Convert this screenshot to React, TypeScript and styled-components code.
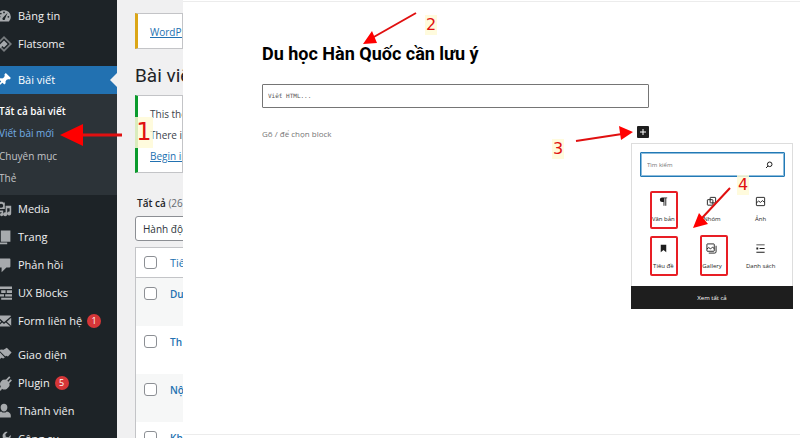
import React from "react";
import styled, { createGlobalStyle, css } from "styled-components";

const GlobalStyle = createGlobalStyle`
  * { box-sizing: border-box; }
  body { margin: 0; background: #fff; }
  body, button, input, select, table {
    font-family: "Open Sans", "Noto Sans", sans-serif;
  }
  h1, p, ul { margin: 0; padding: 0; }
  h1 { font-family: Roboto, "Open Sans", sans-serif; }
`;

/* ---------- page ---------- */

const Page = styled.div`
  position: relative;
  display: flex;
  height: 100vh;
  overflow: hidden;
`;

/* ---------- admin menu ---------- */

const Sidebar = styled.nav`
  flex: 0 0 117px;
  padding-top: 2px;
  background: #1d2327;
  overflow: hidden;
`;

const MenuGroup = styled.ul<{ $rows: number }>`
  display: grid;
  grid-auto-rows: 1fr;
  height: ${(p) => Math.floor((p.$rows * 55) / 2)}px;
  margin-bottom: 9px;
  list-style: none;
`;

const MenuLink = styled.a<{ $active?: boolean }>`
  position: relative;
  display: flex;
  align-items: center;
  gap: 6px;
  height: 28px;
  margin-left: -4px;
  color: #f0f0f1;
  font-size: 11px;
  font-weight: 500;
  line-height: 16px;
  white-space: nowrap;
  text-decoration: none;
  svg {
    flex: none;
    width: 16px;
    height: 16px;
    color: ${(p) => (p.$active ? "#fff" : "#a7aaad")};
  }
  ${(p) =>
    p.$active &&
    css`
      background: #2271b1;
      color: #fff;
      &::after {
        content: "";
        position: absolute;
        right: 0;
        top: 7px;
        border: 7px solid transparent;
        border-left-width: 0;
        border-right-color: #f0f0f1;
      }
    `}
`;

const Submenu = styled.ul`
  display: grid;
  grid-auto-rows: 1fr;
  align-items: center;
  height: 101px;
  padding: 6px 0;
  background: #2c3338;
  list-style: none;
`;

const SubmenuLink = styled.a<{ $tone?: "current" | "hover" }>`
  display: block;
  margin-left: -1px;
  color: ${(p) =>
    p.$tone === "current" ? "#fff" : p.$tone === "hover" ? "#72aee6" : "#c3c4c7"};
  font-size: 10px;
  font-weight: ${(p) => (p.$tone === "current" ? 600 : 400)};
  line-height: 16px;
  white-space: nowrap;
  text-decoration: none;
`;

const Count = styled.span`
  width: 14px;
  height: 14px;
  margin-left: -1px;
  border-radius: 50%;
  background: #d63638;
  color: #fff;
  font-size: 9px;
  line-height: 14px;
  text-align: center;
`;

/* ---------- post list ---------- */

const ListPane = styled.section`
  flex: 0 0 66px;
  padding: 13px 0 0 18px;
  background: #f0f0f1;
  color: #3c434a;
  font-size: 10px;
  white-space: nowrap;
  overflow: hidden;
`;

const Notice = styled.div<{ $color: string }>`
  display: flex;
  flex-direction: column;
  gap: 5px;
  padding: 10px 0 8px 12px;
  border: 1px solid #c3c4c7;
  border-left: 3px solid ${(p) => p.$color};
  background: #fff;
  line-height: 16px;
  overflow: hidden;
`;

const TextLink = styled.a`
  color: #2271b1;
`;

const ListTitle = styled.h1`
  padding: 15px 0 7px;
  color: #1d2327;
  font-size: 19px;
  font-weight: 400;
  line-height: 24px;
`;

const Filter = styled.p`
  padding: 22px 0 5px 2px;
  line-height: 16px;
  color: #646970;
  b { color: #1d2327; font-weight: 600; }
`;

const BulkSelect = styled.select`
  display: block;
  appearance: none;
  width: 120px;
  height: 25px;
  padding: 0 7px;
  border: 1px solid #8c8f94;
  border-radius: 3px;
  background: #fff;
  color: #2c3338;
  font-size: 10px;
`;

const PostTable = styled.table`
  width: 120px;
  margin-top: 6px;
  border: 1px solid #c3c4c7;
  border-collapse: separate;
  border-spacing: 0;
  background: #fff;
  font-size: 11px;
  th, td { padding: 8px 0 0; text-align: left; vertical-align: top; }
  th:first-child, td:first-child { width: 34px; padding-left: 8px; }
  thead th { height: 30px; border-bottom: 1px solid #c3c4c7; font-weight: 400; color: #2271b1; line-height: 14px; }
  tbody td { height: 48px; padding-top: 9px; line-height: 14px; }
  tbody tr:nth-child(odd) { background: #f6f7f7; }
`;

const Check = styled.input`
  display: block;
  appearance: none;
  width: 13px;
  height: 13px;
  margin: 0;
  border: 1px solid #8c8f94;
  border-radius: 3px;
  background: #fff;
`;

const RowLink = styled.a`
  color: #2271b1;
  font-size: 10px;
  font-weight: 600;
  text-decoration: none;
`;

/* ---------- block editor ---------- */

const Editor = styled.main`
  flex: 1;
  min-width: 0;
  display: flex;
  flex-direction: column;
  border-top: 1px solid #fff;
  background: #fff;
`;

const Canvas = styled.div`
  flex: 1;
  padding: 40px 79px 0;
  border-top: 1px solid #ececec;
  border-bottom: 1px solid #ececec;
`;

const StatusBar = styled.div`
  height: 3px;
`;

const Blocks = styled.div`
  display: flex;
  flex-direction: column;
  max-width: 387px;
`;

const PostTitle = styled.h1`
  margin-bottom: 18px;
  color: #000;
  font-size: 18px;
  font-weight: 700;
  line-height: 24px;
  white-space: nowrap;
`;

const HtmlInput = styled.input`
  height: 24px;
  margin-bottom: 18px;
  padding: 0 5px 1px;
  border: 1px solid #757575;
  border-radius: 1px;
  font-family: "DejaVu Sans Mono", monospace;
  font-size: 6px;
  &::placeholder { color: #555; opacity: 1; }
`;

const AppenderRow = styled.div`
  display: flex;
  align-items: flex-start;
  justify-content: space-between;
  color: #757575;
  font-size: 8px;
  line-height: 16px;
`;

const Inserter = styled.div`
  position: relative;
`;

const AddButton = styled.button`
  display: grid;
  place-items: center;
  width: 12px;
  height: 12px;
  padding: 0;
  border: 0;
  border-radius: 1px;
  background: #1e1e1e;
  color: #fff;
`;

const Popover = styled.div`
  position: absolute;
  top: 17px;
  left: -6px;
  width: 162px;
  border: 1px solid #ddd;
  background: #fff;
  color: #1e1e1e;
`;

const SearchBox = styled.label`
  display: flex;
  align-items: center;
  height: 25px;
  margin: 8px 7px 12px 8px;
  padding: 0 11px 0 6px;
  border: 1px solid #2279b5;
  border-radius: 1px;
  box-shadow: inset 0 0 0 1px #8cbcdc;
  input {
    flex: 1;
    min-width: 0;
    padding: 0;
    border: 0;
    outline: 0;
    background: none;
    font-size: 6px;
  }
  input::placeholder { color: #757575; opacity: 1; }
`;

const BlockGrid = styled.div`
  display: grid;
  grid-template-columns: repeat(3, 1fr);
  margin: 0 7px 3px;
`;

const BlockButton = styled.button`
  display: flex;
  flex-direction: column;
  align-items: center;
  gap: 7px;
  height: 47px;
  padding: 7px 0 0;
  border: 0;
  background: none;
  color: #1e1e1e;
  font-size: 6px;
  line-height: 10px;
`;

const BrowseAll = styled.button`
  display: block;
  width: calc(100% + 2px);
  height: 23px;
  margin: 0 -1px -1px;
  border: 0;
  background: #1e1e1e;
  color: #fff;
  font-size: 6px;
  font-weight: 500;
`;

/* ---------- tutorial marks over the page ---------- */

const Marks = styled.div`
  position: absolute;
  inset: 0;
  pointer-events: none;
  overflow: hidden;
`;

const Arrows = styled.svg`
  position: absolute;
  left: 0;
  top: 0;
`;

const Step = styled.span<{ $x: number; $y: number; $large?: boolean }>`
  position: absolute;
  left: ${(p) => p.$x}px;
  top: ${(p) => p.$y}px;
  width: ${(p) => (p.$large ? 18 : 12)}px;
  background: rgba(255, 250, 215, 0.85);
  color: #e01010;
  font-family: "DejaVu Sans", sans-serif;
  font-size: ${(p) => (p.$large ? 24 : 16)}px;
  line-height: ${(p) => (p.$large ? 31 : 20)}px;
  display: flex;
  justify-content: center;
`;

const Frame = styled.div<{ $x: number; $y: number; $h: number }>`
  position: absolute;
  left: ${(p) => p.$x}px;
  top: ${(p) => p.$y}px;
  width: 28px;
  height: ${(p) => p.$h}px;
  border: 2px solid #e81e25;
  border-radius: 2px;
`;

/* ---------- icons ---------- */

const solid: Record<string, React.ReactNode> = {
  dashboard: (
    <>
      <path d="M3.800 17a8.500 8.500 0 1 1 12.400 0z" />
      <g fill="#1d2327">
        <circle cx="10" cy="5.500" r="1.100" /><circle cx="6" cy="7" r="1.100" />
        <circle cx="4.500" cy="11" r="1.100" /><circle cx="15.500" cy="11" r="1.100" />
        <path d="M14.500 6 11.400 13a1.700 1.700 0 1 1-2.500-1.200z" />
      </g>
    </>
  ),
  flatsome: (
    <>
      <path d="M10 0 20 10 10 20 0 10zm0 3L3 10l7 7 7-7z" fillRule="evenodd" opacity=".65" />
      <path d="M10 5.500 14.500 10 10 14.500 8 12.500 5.500 15 3 12.500z" />
    </>
  ),
  pin: <path d="M10.440 3.020l1.820-1.820 6.360 6.350-1.830 1.820c-1.050-.68-2.480-.57-3.410.36l-.75.75c-.92.93-1.040 2.350-.35 3.410l-1.830 1.820-2.410-2.410-2.800 2.790c-.42.42-3.380 2.710-3.800 2.290s1.860-3.390 2.280-3.810l2.790-2.790L4.100 9.360l1.830-1.820c1.050.69 2.480.57 3.400-.36l.75-.75c.93-.92 1.050-2.350.36-3.410z" />,
  media: (
    <>
      <path fillRule="evenodd" d="M2 2h2l1-1h3l1 1h2v8H2zm4.500 1.500a2.500 2.500 0 1 0 0 5 2.500 2.500 0 0 0 0-5z" />
      <path d="M12 6h7v9.500a2.500 2.500 0 1 1-2-2.400V9h-3v7.500a2.500 2.500 0 1 1-2-2.400zM4 12h5v5a2 2 0 1 1-2-2v-1H4z" />
    </>
  ),
  pages: <path d="M6 2h12v14H6zM2 5h3v12h9v2H2z" />,
  comment: <path d="M3 2h14a1 1 0 0 1 1 1v9a1 1 0 0 1-1 1h-4l-6 6v-6H3a1 1 0 0 1-1-1V3a1 1 0 0 1 1-1z" />,
  blocks: (
    <path d="M0 2h20v3H0zM0 6.500h5V10H0zm6.500 0H12V10H6.500zm7 0H20V10h-6.500zM0 11.500h10v3H0zm11.500 0H20v3h-8.500zM0 16h5v2.500H0zm6.500 0H20v2.500H6.500z" />
  ),
  mail: <path d="M2 3h16l.8 1L10 11.500 1.200 4zM1 6l5.500 4.800L1 16zM19 6v10l-5.500-5.200zM7.700 11.900 10 13.800l2.300-1.900L18 17H2z" />,
  brush: <path d="m9.500 3.500 4-2.500 6 6-4.500 5-2.500-1-.8.8L4.200 4.500l2-1.500zM3.500 5.500l7.500 7.500-2 1.500-2.500-1-4.500 5c-1 .8-2.700-.8-1.900-1.900L5 12 2 7.500z" />,
  plug: <path d="m12.500 5.500 4-4 1.600 1.600-4 4 1.300 1.300 3-3 1.500 1.600-3.300 3.400c1 2.400 0 4.400-2 6l-1.200 1.100c-2.300 1.200-4.600.9-6-.3L6.500 19c-1.500 1-6 1-6 1v-2c2 0 3.300-.1 4.200-.8L6 14c-1.800-2-1-4.700.8-6.500L8.500 6z" />,
  user: <path d="M10 1a4.200 4.200 0 0 1 4.200 4.500c0 2.800-1.700 5-4.200 5s-4.200-2.200-4.200-5A4.200 4.200 0 0 1 10 1zM6.500 10.500c2 2 5 2 7 0 3 .5 5 2.500 5 5V18h-17v-2.500c0-2.500 2-4.500 5-5z" />,
  wrench: <path d="M17 9.500c-1.600 1.700-3.800 2-5.600 1.200L5 17.600a2 2 0 0 1-3-3l6.700-6.500c-.9-1.800-.4-4 1.200-5.500C11.300 1 13 .8 14.500 1.200L11.700 4l.5 3.300 3.400.5 2.700-2.800c.5 1.500.1 3.300-1.300 4.500z" />,
};

const MenuIcon = ({ name }: { name: string }) => (
  <svg viewBox="0 0 20 20" fill="currentColor" aria-hidden="true">{solid[name]}</svg>
);

const blockIcons: Record<string, React.ReactNode> = {
  paragraph: <path d="M9 3h11v2h-2v16h-2V5h-2v16h-2v-8H9A5 5 0 0 1 9 3z" fill="currentColor" />,
  group: (
    <g fill="none" stroke="currentColor" strokeWidth="2">
      <rect x="3" y="8" width="12" height="12" rx="1" /><rect x="9" y="3" width="12" height="12" rx="1" />
    </g>
  ),
  image: (
    <g fill="none" stroke="currentColor" strokeWidth="2">
      <rect x="3" y="3" width="18" height="18" rx="1" /><path d="m3 15 5-4 4 3 4-4 5 4" />
    </g>
  ),
  heading: <path d="M6 4h12v16l-6-5-6 5z" fill="currentColor" />,
  gallery: (
    <g fill="none" stroke="currentColor" strokeWidth="2">
      <rect x="2" y="2" width="16" height="16" rx="1" /><path d="m2 13 4-3 4 3 4-4 4 3M22 6v13a3 3 0 0 1-3 3H6" />
    </g>
  ),
  list: <path d="M3 3h18v2H3zM10 11h11v2H10zM3 19h18v2H3zM3 10h4v4H3z" fill="currentColor" />,
};

const BlockIcon = ({ name }: { name: string }) => (
  <svg width="11" height="11" viewBox="0 0 24 24" aria-hidden="true">{blockIcons[name]}</svg>
);

/* ---------- data ---------- */

type Item = { icon: string; label: string; count?: number };

const topItems: Item[] = [
  { icon: "dashboard", label: "Bảng tin" },
  { icon: "flatsome", label: "Flatsome" },
];
const contentItems: Item[] = [
  { icon: "media", label: "Media" },
  { icon: "pages", label: "Trang" },
  { icon: "comment", label: "Phản hồi" },
  { icon: "blocks", label: "UX Blocks" },
  { icon: "mail", label: "Form liên hệ", count: 1 },
];
const adminItems: Item[] = [
  { icon: "brush", label: "Giao diện" },
  { icon: "plug", label: "Plugin", count: 5 },
  { icon: "user", label: "Thành viên" },
  { icon: "wrench", label: "Công cụ" },
];
const blocks = [
  ["paragraph", "Văn bản"],
  ["group", "Nhóm"],
  ["image", "Ảnh"],
  ["heading", "Tiêu đề"],
  ["gallery", "Gallery"],
  ["list", "Danh sách"],
];

const Menu = ({ items }: { items: Item[] }) => (
  <MenuGroup $rows={items.length}>
    {items.map((item) => (
      <li key={item.label}>
        <MenuLink href="#">
          <MenuIcon name={item.icon} />
          {item.label}
          {item.count && <Count>{item.count}</Count>}
        </MenuLink>
      </li>
    ))}
  </MenuGroup>
);

export default function App() {
  return (
    <Page>
      <GlobalStyle />
      <Sidebar>
        <Menu items={topItems} />
        <MenuLink href="#" $active>
          <MenuIcon name="pin" />
          Bài viết
        </MenuLink>
        <Submenu>
          <li><SubmenuLink href="#" $tone="current">Tất cả bài viết</SubmenuLink></li>
          <li><SubmenuLink href="#" $tone="hover">Viết bài mới</SubmenuLink></li>
          <li><SubmenuLink href="#">Chuyên mục</SubmenuLink></li>
          <li><SubmenuLink href="#">Thẻ</SubmenuLink></li>
        </Submenu>
        <Menu items={contentItems} />
        <Menu items={adminItems} />
      </Sidebar>

      <ListPane>
        <Notice $color="#dba617"><TextLink href="#">WordPress</TextLink></Notice>
        <ListTitle>Bài viết</ListTitle>
        <Notice $color="#0a9b2c">
          <p>This theme</p>
          <p>There is</p>
          <TextLink href="#">Begin installing</TextLink>
        </Notice>
        <Filter><b>Tất cả</b> (26)</Filter>
        <BulkSelect aria-label="Hành động"><option>Hành động</option></BulkSelect>
        <PostTable>
          <thead>
            <tr><th><Check type="checkbox" aria-label="Chọn tất cả" /></th><th>Tiêu đề</th></tr>
          </thead>
          <tbody>
            {["Du", "Th", "Nộ", "Kh"].map((title) => (
              <tr key={title}>
                <td><Check type="checkbox" aria-label={title} /></td>
                <td><RowLink href="#">{title}</RowLink></td>
              </tr>
            ))}
          </tbody>
        </PostTable>
      </ListPane>

      <Editor>
        <Canvas>
          <Blocks>
            <PostTitle>Du học Hàn Quốc cần lưu ý</PostTitle>
            <HtmlInput aria-label="HTML" placeholder="Viết HTML..." />
            <AppenderRow>
              <span>Gõ / để chọn block</span>
              <Inserter>
                <AddButton aria-label="Thêm block">
                  <svg width="8" height="8" viewBox="0 0 8 8" stroke="currentColor" aria-hidden="true">
                    <path d="M4 1v6M1 4h6" />
                  </svg>
                </AddButton>
                <Popover>
                  <SearchBox>
                    <input type="text" aria-label="Tìm kiếm" placeholder="Tìm kiếm" />
                    <svg width="8" height="8" viewBox="0 0 8 8" fill="none" stroke="currentColor" aria-hidden="true">
                      <circle cx="4.700" cy="3.300" r="2.300" /><path d="M3 5 1 7" />
                    </svg>
                  </SearchBox>
                  <BlockGrid>
                    {blocks.map(([icon, label]) => (
                      <BlockButton key={icon}>
                        <BlockIcon name={icon} />
                        {label}
                      </BlockButton>
                    ))}
                  </BlockGrid>
                  <BrowseAll>Xem tất cả</BrowseAll>
                </Popover>
              </Inserter>
            </AppenderRow>
          </Blocks>
        </Canvas>
        <StatusBar />
      </Editor>

      <Marks>
        <Frame $x={650} $y={191} $h={38} />
        <Frame $x={650} $y={236} $h={40} />
        <Frame $x={700} $y={235} $h={41} />
        <Step $x={135} $y={117} $large>1</Step>
        <Step $x={425} $y={15}>2</Step>
        <Step $x={552} $y={139}>3</Step>
        <Step $x={737} $y={175}>4</Step>
        <Arrows width="800" height="438" viewBox="0 0 800 438" stroke="#e01010" aria-hidden="true">
          <path d="M80 135H122" strokeWidth="3" />
          <path d="M416 13 372 38M576 141 622 134M730 188 702 218" strokeWidth="2" />
          <path
            d="M60 135 83 124V146zM363 44 372 31 377 43zM633 132 619 126 621 140zM693 228 699 213 708 224z"
            fill="#ff0000"
            stroke="none"
          />
        </Arrows>
      </Marks>
    </Page>
  );
}
